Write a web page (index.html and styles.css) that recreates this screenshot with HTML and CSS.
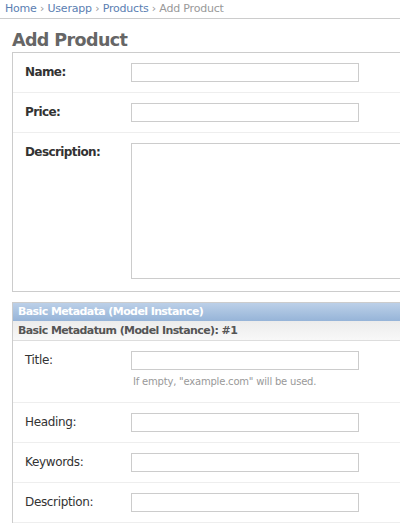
FILE: index.html
```html
<!DOCTYPE html>
<html>
<head>
<meta charset="utf-8">
<link rel="stylesheet" href="styles.css">
</head>
<body>
<div class="breadcrumbs"><a href="#">Home</a> › <a href="#">Userapp</a> › <a href="#">Products</a> › Add Product</div>
<div class="content">
  <h1>Add Product</h1>
  <fieldset class="module">
    <div class="form-row">
      <label class="required">Name:</label>
      <input type="text" class="vText">
    </div>
    <div class="form-row">
      <label class="required">Price:</label>
      <input type="text" class="vText">
    </div>
    <div class="form-row last">
      <label class="required">Description:</label>
      <textarea class="vLargeText"></textarea>
    </div>
  </fieldset>
  <div class="inline-group">
    <h2 class="inline-title">Basic Metadata (Model Instance)</h2>
    <h3 class="inline-sub">Basic Metadatum (Model Instance): #1</h3>
    <fieldset class="module inner">
      <div class="form-row">
        <label>Title:</label>
        <div class="field">
          <input type="text" class="vText">
          <p class="help">If empty, "example.com" will be used.</p>
        </div>
      </div>
      <div class="form-row">
        <label>Heading:</label>
        <input type="text" class="vText">
      </div>
      <div class="form-row">
        <label>Keywords:</label>
        <input type="text" class="vText">
      </div>
      <div class="form-row">
        <label>Description:</label>
        <input type="text" class="vText">
      </div>
    </fieldset>
  </div>
</div>
</body>
</html>
```
FILE: styles.css
```css
html, body {
  margin: 0;
  padding: 0;
  overflow: hidden;
  background: #fff;
}
body {
  font-family: "DejaVu Sans", Verdana, sans-serif;
  font-size: 11px;
  color: #333;
}
.breadcrumbs {
  height: 18px;
  line-height: 17px;
  padding: 0 5px;
  border-bottom: 1px solid #ccc;
  color: #999;
  font-size: 11px;
  letter-spacing: -0.2px;
  white-space: nowrap;
}
.breadcrumbs a {
  color: #5b80b2;
  text-decoration: none;
}
.content {
  width: 700px;
  padding: 0 0 0 12px;
}
h1 {
  margin: 0;
  padding: 10px 0 0 0;
  height: 23px;
  line-height: 23px;
  font-size: 17.5px;
  font-weight: bold;
  color: #666;
  letter-spacing: -0.6px;
}
fieldset.module {
  margin: 0;
  padding: 0;
  border: 1px solid #ccc;
  border-right: none;
  min-width: 0;
}
fieldset.inner {
  border: none;
}
.form-row {
  display: flex;
  align-items: flex-start;
  padding: 10px 12px;
  border-bottom: 1px solid #eee;
}
.form-row.last {
  border-bottom: none;
  padding-bottom: 12px;
}
.form-row label {
  width: 106px;
  flex: none;
  font-size: 12px;
  line-height: 19px;
  color: #333;
  letter-spacing: -0.35px;
}
.form-row label.required {
  font-weight: bold;
  letter-spacing: -0.6px;
}
.vText {
  box-sizing: border-box;
  width: 228px;
  height: 19px;
  margin: 0;
  padding: 0;
  border: 1px solid #ccc;
  background: #fff;
  display: block;
}
.vLargeText {
  box-sizing: border-box;
  width: 500px;
  height: 136px;
  margin: 0;
  padding: 0;
  border: 1px solid #ccc;
  resize: none;
  display: block;
}
.help {
  margin: 5px 0 0 2px;
  height: 17px;
  line-height: 14px;
  font-size: 10px;
  color: #999;
  letter-spacing: -0.2px;
}
.inline-group {
  margin-top: 10px;
  border-left: 1px solid #ccc;
  border-top: 1px solid #ccc;
}
.inline-title {
  margin: 0;
  height: 18px;
  line-height: 18px;
  padding: 0 0 0 5px;
  font-size: 11px;
  font-weight: bold;
  color: #fff;
  background: linear-gradient(#bcd0e8, #96b4d8);
  letter-spacing: -0.6px;
}
.inline-sub {
  margin: 0;
  height: 19px;
  line-height: 19px;
  padding: 0 0 0 5px;
  font-size: 11px;
  font-weight: bold;
  color: #555;
  background: linear-gradient(#ececec, #f8f8f8);
  border-bottom: 1px solid #ddd;
  letter-spacing: -0.6px;
}
```
